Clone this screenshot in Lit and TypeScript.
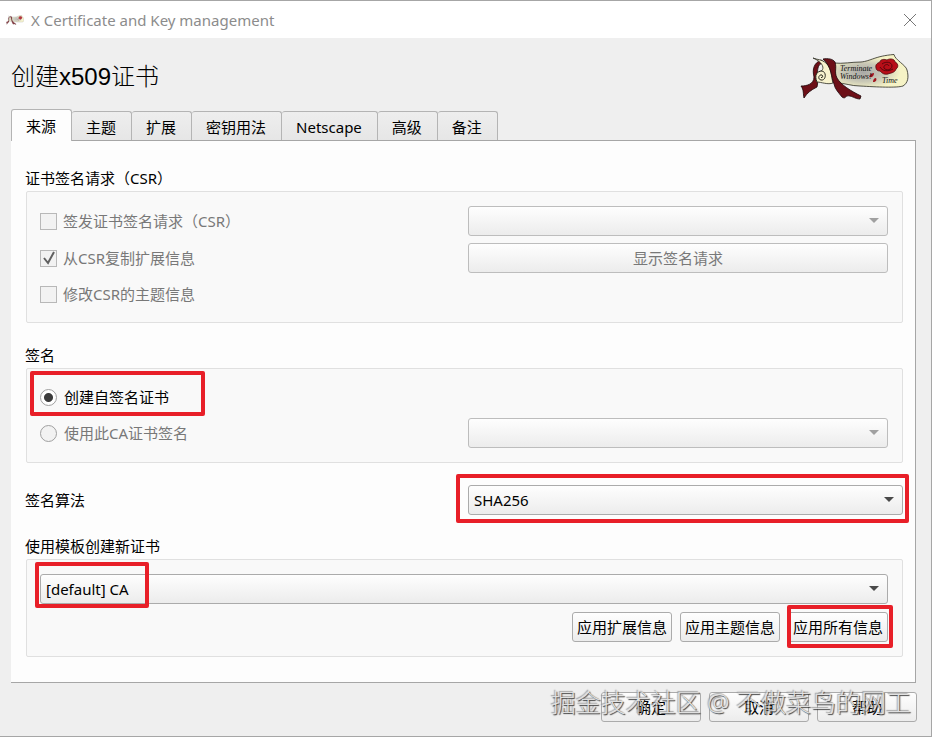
import { LitElement, html, css, svg } from "lit";
import { customElement, property, state } from "lit/decorators.js";
import { classMap } from "lit/directives/class-map.js";

const controls = css`
  :host {
    font-family: "Noto Sans", "Noto Sans CJK SC", sans-serif;
    font-size: 15px;
    line-height: 20px;
    color: #000;
  }
  * {
    box-sizing: border-box;
  }
  button,
  select,
  input {
    font: inherit;
    color: inherit;
    margin: 0;
  }
  .push {
    height: 30px;
    padding: 0 4px;
    border: 1px solid #ababab;
    border-radius: 3px;
    background: linear-gradient(#fefefe, #ececec);
    white-space: nowrap;
  }
  .push:disabled {
    border-color: #bdbdbd;
    color: #787878;
  }
`;

const parchment = svg`
  <defs>
    <radialGradient id="paper" cx=".4" cy=".55" r=".5">
      <stop offset="0" stop-color="#a9a9a6" />
      <stop offset=".55" stop-color="#c9c8b6" />
      <stop offset="1" stop-color="#f6f3c6" />
    </radialGradient>
  </defs>
  <path d="M34 10 C45 11 52 9 62 9 C72 8 76 3 95 1.500 C96 7 107 12 108 17 C110 24 109 30 104 33 C98 35 78 34 61 33 C52 33 46 30 38 30 Z"
    fill="url(#paper)" stroke="#2a2a20" stroke-width=".8"/>
  <path d="M22 7 C15 10 13 16 15 24 C15 31 8 33 2 33 C5 37 4 41 5 45 C8 40 12 37 18 34 C20 29 17 20 19 15 C20 11 23 10 25 9 Z"
    fill="#6d0f17" stroke="#1c0507" stroke-width=".8"/>
  <path d="M14 5 C19 7 22 6 27 10 C33 16 32 23 34 30 C29 32 22 29 18 29 C16 25 17 20 22 18 C26 16 24 9 14 5 Z"
    fill="#f8f3cf" stroke="#2a2a20" stroke-width=".8"/>
  <path d="M18 29 C15 22 18 18 23 18 C28 19 27 28 22 27 C18 26 20 21 23 22 C24 23 24 25 22 24.500"
    fill="#f8f3cf" stroke="#2a2a20" stroke-width="1"/>
  <path d="M24 6 C29 5 34 6 36 9 C38 15 35 19 38 25 C42 32 52 38 62 43 L61 46 C56 46 52 42 48 43 C46 44 46 46 43 44 C39 39 36 36 35 31 C32 24 33 14 24 6 Z"
    fill="#6d0f17" stroke="#1c0507" stroke-width=".8"/>
  <path d="M77 15 C76 11 79 10 81 9 C81 6 86 6 88 7 C91 5 96 6 96 9 C99 10 100 14 97 16 C96 20 91 20 89 21 C85 22 83 20 81 18 C79 18 77 17 77 15 Z"
    fill="#b80e18" stroke="#4f060b" stroke-width=".8"/>
  <path d="M83 11 C87 8 93 9 93 13 C93 17 87 18 85 15 C84 12 89 10 90 13 M81 14 C83 18 89 19 94 16"
    fill="none" stroke="#4f060b" stroke-width=".9"/>
  <path d="M70 24 C71 21 73 20 75 20 C75 23 73 25 70 24 Z M74 29 C74 27 75 25 77 25 C78 27 77 29 74 29 Z" fill="#a3141d"/>
`;

@customElement("xca-select")
export class XcaSelect extends LitElement {
  @property() value = "";
  @property() label = "";
  @property({ type: Boolean }) disabled = false;

  static styles = [
    controls,
    css`
      :host {
        display: block;
        position: relative;
      }
      .combo {
        display: block;
        width: 100%;
        height: 30px;
        padding: 0 24px 0 5px;
        border: 1px solid #ababab;
        border-radius: 3px;
        background: linear-gradient(#fefefe, #ececec);
        appearance: none;
        opacity: 1;
      }
      .combo:disabled {
        border-color: #bdbdbd;
      }
      .arrow {
        position: absolute;
        right: 9px;
        top: 12px;
        width: 10px;
        height: 5px;
        fill: #4a4a4a;
        pointer-events: none;
      }
      .arrow.off {
        fill: #a0a0a0;
      }
    `,
  ];

  render() {
    return html`
      <select class="combo" aria-label=${this.label} ?disabled=${this.disabled}>
        <option>${this.value}</option>
      </select>
      <svg class=${classMap({ arrow: true, off: this.disabled })} viewBox="0 0 10 5" aria-hidden="true">
        <path d="M0 0H10L5 5Z" />
      </svg>
    `;
  }
}

@customElement("app-root")
export class AppRoot extends LitElement {
  @state() private tab = 0;

  private tabs = ["来源", "主题", "扩展", "密钥用法", "Netscape", "高级", "备注"];

  static styles = [
    controls,
    css`
      :host {
        display: block;
      }
      .window {
        position: relative;
        display: flex;
        flex-direction: column;
        min-height: 100vh;
        background: #efefef;
        border: 1px solid #a6a6a6;
        border-left: 0;
      }
      .titlebar {
        display: flex;
        align-items: center;
        height: 37px;
        padding: 0 14px 0 6px;
        background: #fff;
        color: #8c8c8c;
      }
      .mark {
        width: 18px;
        height: 10px;
        margin-right: 7px;
        opacity: 0.8;
      }
      .caption {
        flex: 1;
      }
      .close {
        width: 14px;
        height: 14px;
        padding: 0;
        border: 0;
        background: none;
      }
      .close svg {
        display: block;
        stroke: #777;
        fill: none;
      }
      .content {
        flex: 1;
        padding: 0 14px 14px 11px;
      }
      .header {
        display: flex;
        align-items: center;
        justify-content: space-between;
        height: 71px;
        padding: 6px 8px 0 0;
      }
      .heading {
        margin: 0;
        font: 300 24px/32px "Liberation Sans", "Noto Sans CJK SC", sans-serif;
      }
      .logo {
        width: 110px;
        height: 48px;
      }
      .script {
        font: italic 8px "Liberation Serif", serif;
        fill: #111;
      }
      .tabs {
        display: flex;
        align-items: flex-end;
        height: 32px;
      }
      .tab {
        height: 29px;
        margin: 0 0 1px;
        padding: 1px 15px 0 14px;
        border: 1px solid #b4b4b4;
        border-width: 1px 1px 0 0;
        border-radius: 3px 3px 0 0;
        background: linear-gradient(#eeeeee, #e6e6e6);
      }
      .tab:first-child {
        border-left-width: 1px;
      }
      .tab.active {
        position: relative;
        height: 32px;
        margin: 0;
        background: #fdfdfd;
      }
      .pane {
        margin: -1px 1px 0 0;
        padding: 27px 12px 25px 14px;
        border: 1px solid #a6a6a6;
        border-left: 0;
        background: #fdfdfd;
      }
      .group {
        margin: 0 0 22px;
        padding: 0;
        border: 0;
        min-width: 0;
      }
      .group.last {
        margin: 0;
      }
      .legend {
        padding: 0;
        margin-bottom: 3px;
        line-height: 20px;
      }
      .box {
        margin-left: 1px;
        padding: 14px 14px 14px 13px;
        border: 1px solid #e0e0e0;
        border-radius: 2px;
        background: #f9f9f9;
      }
      .pair {
        display: grid;
        grid-template-columns: 1fr 1fr;
        gap: 7px 8px;
        align-items: center;
      }
      .pair .push {
        width: 100%;
      }
      .option {
        position: relative;
        display: flex;
        align-items: center;
        gap: 6px;
        height: 28px;
        justify-self: start;
      }
      .option.off {
        color: #787878;
      }
      .tick,
      .radio {
        appearance: none;
        width: 17px;
        height: 17px;
        border: 1px solid #b8b8b8;
        background: #f2f2f2;
      }
      .radio {
        border-radius: 50%;
        border-color: #a0a0a0;
        margin-right: 1px;
      }
      .radio:checked {
        background: radial-gradient(circle, #3c3c3c 4px, #fff 5px);
      }
      .check {
        position: absolute;
        left: 3px;
        width: 12px;
        height: 14px;
        fill: none;
        stroke: #606060;
        stroke-width: 2;
      }
      .algorithm {
        margin-bottom: 21px;
      }
      .marked {
        position: relative;
      }
      .highlight {
        position: absolute;
        inset: -11px -6px -8px -12px;
        border: 4px solid #e81f28;
        border-radius: 2px;
        pointer-events: none;
      }
      .highlight.self-signed {
        inset: -12px -36px -5px -10px;
      }
      .highlight.template {
        inset: -12px auto -4px -5px;
        width: 114px;
      }
      .highlight.apply {
        inset: -7px -5px -6px -1px;
      }
      .actions {
        display: flex;
        justify-content: flex-end;
        gap: 8px;
        margin-top: 8px;
      }
      .actions .push {
        width: 100px;
      }
      .actions .marked .push {
        display: block;
      }
      .footer {
        margin-top: 9px;
      }
      .watermark {
        position: absolute;
        right: 20px;
        bottom: 18px;
        font: 300 25px/32px "Noto Sans", "Noto Sans CJK SC", sans-serif;
        color: #dedede;
        text-shadow: 1px 1px 1px #222, -1px -1px 1px #999;
        opacity: 0.85;
        white-space: nowrap;
        pointer-events: none;
      }
    `,
  ];

  render() {
    return html`
      <main class="window">
        <header class="titlebar">
          <svg class="mark" viewBox="0 0 110 48" preserveAspectRatio="none" aria-hidden="true">${parchment}</svg>
          <span class="caption">X Certificate and Key management</span>
          <button class="close" aria-label="Close">
            <svg width="14" height="14" viewBox="0 0 14 14"><path d="M1 1L13 13M13 1L1 13" /></svg>
          </button>
        </header>
        <div class="content">
          <div class="header">
            <h1 class="heading">创建x509证书</h1>
            <svg class="logo" viewBox="0 0 110 48">
              ${parchment}
              <text class="script" x="41" y="18">Terminate</text>
              <text class="script" x="41" y="26">Windows!</text>
              <text class="script" x="83" y="30">Time</text>
            </svg>
          </div>
          <div class="tabs" role="tablist">
            ${this.tabs.map(
              (name, i) => html`<button
                role="tab"
                aria-selected=${i === this.tab}
                class=${classMap({ tab: true, active: i === this.tab })}
                @click=${() => (this.tab = i)}
              >${name}</button>`
            )}
          </div>
          <section class="pane" role="tabpanel">
            <div class="group" role="group" aria-labelledby="csr">
              <div class="legend" id="csr">证书签名请求（CSR）</div>
              <div class="box">
                <div class="pair">
                  <label class="option off"><input class="tick" type="checkbox" disabled />签发证书签名请求（CSR）</label>
                  <xca-select label="证书签名请求" disabled></xca-select>
                  <label class="option off">
                    <input class="tick" type="checkbox" checked disabled />
                    <svg class="check" viewBox="0 0 12 14" aria-hidden="true"><path d="M1 7L5 12L11 1" /></svg>
                    从CSR复制扩展信息
                  </label>
                  <button class="push" disabled>显示签名请求</button>
                  <label class="option off"><input class="tick" type="checkbox" disabled />修改CSR的主题信息</label>
                </div>
              </div>
            </div>
            <div class="group" role="group" aria-labelledby="sign">
              <div class="legend" id="sign">签名</div>
              <div class="box">
                <div class="pair">
                  <label class="option">
                    <input class="radio" type="radio" name="signer" checked />创建自签名证书
                    <span class="highlight self-signed"></span>
                  </label>
                  <span></span>
                  <label class="option off"><input class="radio" type="radio" name="signer" disabled />使用此CA证书签名</label>
                  <xca-select label="CA证书" disabled></xca-select>
                </div>
              </div>
            </div>
            <div class="pair algorithm">
              <span>签名算法</span>
              <div class="marked">
                <xca-select label="签名算法" value="SHA256"></xca-select>
                <span class="highlight"></span>
              </div>
            </div>
            <div class="group last" role="group" aria-labelledby="template">
              <div class="legend" id="template">使用模板创建新证书</div>
              <div class="box">
                <div class="marked">
                  <xca-select label="模板" value="[default] CA"></xca-select>
                  <span class="highlight template"></span>
                </div>
                <div class="actions">
                  <button class="push">应用扩展信息</button>
                  <button class="push">应用主题信息</button>
                  <div class="marked">
                    <button class="push">应用所有信息</button>
                    <span class="highlight apply"></span>
                  </div>
                </div>
              </div>
            </div>
          </section>
          <div class="actions footer">
            <button class="push">确定</button>
            <button class="push">取消</button>
            <button class="push">帮助</button>
          </div>
        </div>
        <div class="watermark">掘金技术社区 @ 不做菜鸟的网工</div>
      </main>
    `;
  }
}
